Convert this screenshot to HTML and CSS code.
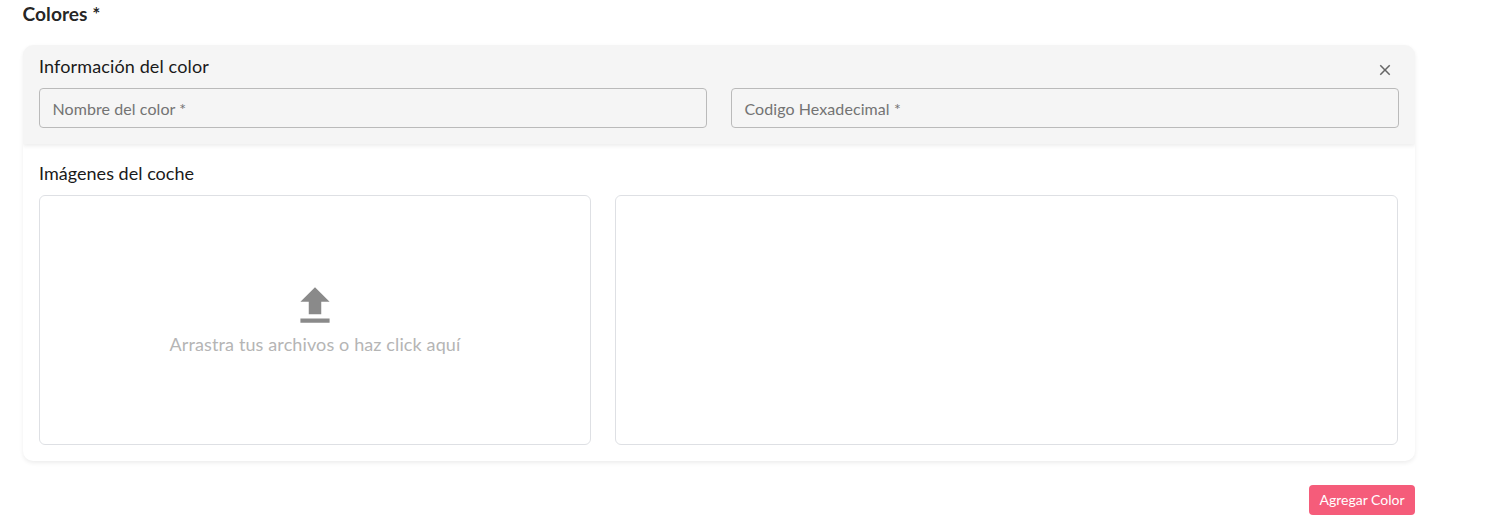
FILE: index.html
```html
<!DOCTYPE html>
<html lang="es">
<head>
<meta charset="utf-8">
<title>Colores</title>
<link rel="stylesheet" href="styles.css">
</head>
<body>
<main class="section">
  <h2 class="section-title">Colores *</h2>
  <div class="card">
    <div class="info">
      <div class="info-head">
        <h3 class="subtitle subtitle-info">Información del color</h3>
        <button class="close" aria-label="Cerrar"><svg viewBox="0 0 24 24" width="18" height="18"><path fill="currentColor" d="M19 6.41 17.59 5 12 10.59 6.41 5 5 6.41 10.59 12 5 17.59 6.41 19 12 13.41 17.59 19 19 17.59 13.41 12z"/></svg></button>
      </div>
      <div class="fields">
        <div class="field">Nombre del color *</div>
        <div class="field">Codigo Hexadecimal *</div>
      </div>
    </div>
    <div class="images">
      <h3 class="subtitle">Imágenes del coche</h3>
      <div class="panels">
        <div class="dropzone">
          <svg class="upload" viewBox="0 0 24 24" width="50" height="50"><path fill="currentColor" d="M9 16h6v-6h4l-7-7-7 7h4zm-4 2h14v2H5z"/></svg>
          <span class="hint">Arrastra tus archivos o haz click aquí</span>
        </div>
        <div class="preview"></div>
      </div>
    </div>
  </div>
  <div class="actions"><button class="add">Agregar Color</button></div>
</main>
</body>
</html>
```

FILE: styles.css
```css
* { box-sizing: border-box; }
body { margin: 0; background: #fff; color: rgba(0, 0, 0, .87); font-family: Lato, sans-serif; }
.section { width: 1392px; margin-left: 23px; }
.section-title { margin: 0 0 0 -.4px; height: 45px; padding-top: 2px; font-size: 19.2px; line-height: 24px; font-weight: 700; }
.card { height: 416px; border-radius: 10px; overflow: hidden; box-shadow: 0 2px 4px rgba(0, 0, 0, .075); }
.info { position: relative; height: 99px; padding: 7px 16px 0; background: #f5f5f5; box-shadow: 0 2px 4px rgba(0, 0, 0, .075); }
.info-head { display: flex; justify-content: space-between; height: 36px; }
.subtitle { margin: 0; font-size: 18px; line-height: 28px; font-weight: 400; color: #1a1a1a; letter-spacing: .03px; }
.subtitle-info { letter-spacing: .13px; }
.close { display: flex; width: 28px; height: 28px; margin-top: 4px; padding: 5px; border: 0; background: none; color: #666; }
.fields { display: grid; grid-template-columns: 1fr 1fr; gap: 24px; }
.field { height: 40px; padding: 0 12.5px; border: 1px solid #bababa; border-radius: 4px; font-size: 16px; line-height: 39px; letter-spacing: .08px; color: #737373; }
.images { padding: 15px 17px 0 16px; }
.panels { display: grid; grid-template-columns: 552px 1fr; gap: 24px; height: 250px; margin-top: 8px; }
.dropzone, .preview { border: 1px solid #dee0e4; border-radius: 6px; }
.dropzone { display: flex; flex-direction: column; align-items: center; justify-content: center; }
.upload { color: #8a8a8a; }
.hint { height: 28px; font-size: 18px; line-height: 26px; letter-spacing: .12px; color: #b5b5b5; }
.actions { display: flex; justify-content: flex-end; padding-top: 24px; }
.add { width: 106px; height: 30px; padding: 0 0 2px; border: 0; border-radius: 4px; background: #f55c7a; color: #fff; font: 400 14px Lato, sans-serif; }
```
